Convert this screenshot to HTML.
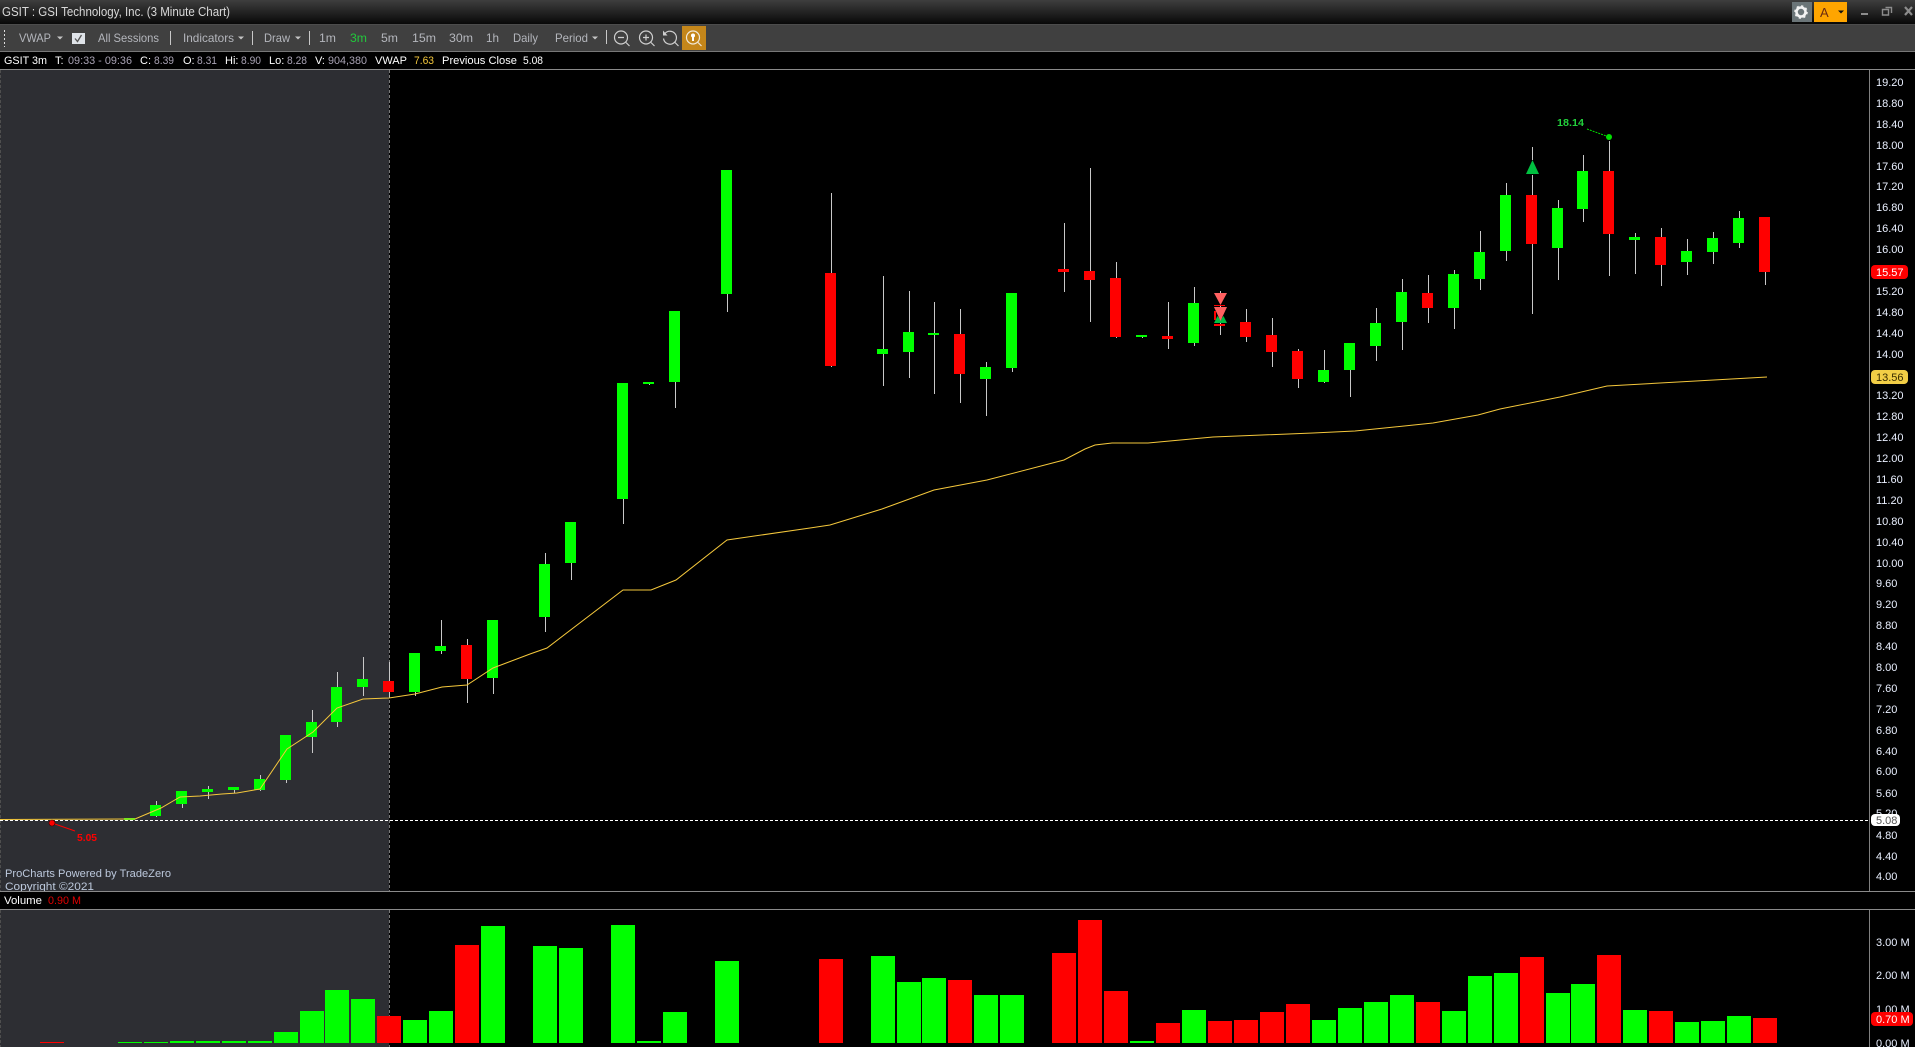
<!DOCTYPE html>
<html lang="en"><head><meta charset="utf-8"><title>GSIT : GSI Technology, Inc. (3 Minute Chart)</title>
<style>
html,body{margin:0;padding:0;background:#000;width:1915px;height:1047px;overflow:hidden}
svg{display:block;font-family:"Liberation Sans",Arial,sans-serif}
.r{shape-rendering:crispEdges}
.tb{font-size:12px;fill:#b4b6bc}
.i{font-size:11px;fill:#fff}
.d{font-size:11px;fill:#a9a3b4}
.a{font-size:11px;fill:#eaf0ff}
</style></head><body>
<svg width="1915" height="1047" viewBox="0 0 1915 1047" xmlns="http://www.w3.org/2000/svg">
<defs><linearGradient id="tg" x1="0" y1="0" x2="0" y2="1"><stop offset="0" stop-color="#3e3e3e"/><stop offset="1" stop-color="#080808"/></linearGradient></defs>
<rect width="1915" height="1047" fill="#000"/>
<!-- title bar -->
<rect class="r" width="1915" height="24" fill="url(#tg)"/>
<text x="2" y="16" font-size="13" fill="#d8d8d8" textLength="228" lengthAdjust="spacingAndGlyphs">GSIT : GSI Technology, Inc. (3 Minute Chart)</text>
<rect class="r" x="1792" y="2" width="20" height="20" fill="#6b7578"/>
<circle cx="1801" cy="12" r="4.5" fill="none" stroke="#f2f2f2" stroke-width="2.6"/>
<circle cx="1801" cy="12" r="6" fill="none" stroke="#f2f2f2" stroke-width="1.6" stroke-dasharray="2.2 2.5"/>
<rect class="r" x="1814" y="2" width="33" height="20" fill="#ffa500"/>
<text x="1820" y="17" font-size="13" fill="#6b2a10">A</text>
<path d="M1838 10.5h6l-3 3z" fill="#111"/>
<rect class="r" x="1861" y="13" width="7" height="2" fill="#8c8c8c"/>
<path d="M1885.5 7.5h6v5.500M1882.500 9.500h6v5.500h-6z" fill="none" stroke="#8c8c8c" stroke-width="1.400"/>
<path d="M1905 7l7 8M1912 7l-7 8" stroke="#8c8c8c" stroke-width="2.200"/>
<!-- toolbar -->
<rect class="r" y="24" width="1915" height="27" fill="#404040"/>
<rect class="r" y="24" width="1915" height="1" fill="#4c4c4c"/>
<rect class="r" y="51" width="1915" height="1" fill="#777"/>
<path class="r" d="M4.500 30v17" stroke="#ddd" stroke-dasharray="2 2"/>
<text class="tb" x="19" y="42" textLength="32" lengthAdjust="spacingAndGlyphs">VWAP</text>
<path d="M57 36.500h6l-3 3z" fill="#c4c4c4"/>
<rect class="r" x="72" y="33" width="13" height="11" fill="#dfe3e8"/>
<path d="M75 38.500l2.500 3 4-6.500" fill="none" stroke="#555" stroke-width="1.300"/>
<text class="tb" x="98" y="42" textLength="61" lengthAdjust="spacingAndGlyphs">All Sessions</text>
<rect class="r" x="170" y="31" width="1" height="14" fill="#c8c8c8"/>
<text class="tb" x="183" y="42" textLength="51" lengthAdjust="spacingAndGlyphs">Indicators</text>
<path d="M238 36.500h6l-3 3z" fill="#c4c4c4"/>
<rect class="r" x="252" y="31" width="1" height="14" fill="#c8c8c8"/>
<text class="tb" x="264" y="42" textLength="26" lengthAdjust="spacingAndGlyphs">Draw</text>
<path d="M295 36.500h6l-3 3z" fill="#c4c4c4"/>
<rect class="r" x="309" y="31" width="1" height="14" fill="#c8c8c8"/>
<text class="tb" x="319" y="42" textLength="17" lengthAdjust="spacingAndGlyphs">1m</text>
<text class="tb" x="350" y="42" textLength="17" lengthAdjust="spacingAndGlyphs" style="fill:#22c83c">3m</text>
<text class="tb" x="381" y="42" textLength="17" lengthAdjust="spacingAndGlyphs">5m</text>
<text class="tb" x="412" y="42" textLength="24" lengthAdjust="spacingAndGlyphs">15m</text>
<text class="tb" x="449" y="42" textLength="24" lengthAdjust="spacingAndGlyphs">30m</text>
<text class="tb" x="486" y="42" textLength="13" lengthAdjust="spacingAndGlyphs">1h</text>
<text class="tb" x="513" y="42" textLength="25" lengthAdjust="spacingAndGlyphs">Daily</text>
<text class="tb" x="555" y="42" textLength="33" lengthAdjust="spacingAndGlyphs">Period</text>
<path d="M592 36.500h6l-3 3z" fill="#c4c4c4"/>
<rect class="r" x="606" y="30" width="1" height="14" fill="#c8c8c8"/>
<g fill="none" stroke="#cfcfcf" stroke-width="1.200">
<circle cx="621" cy="37.500" r="6.500"/><path d="M618 37.500h6M626 42.500l3.500 3.500"/>
<circle cx="646" cy="37.500" r="6.500"/><path d="M643 37.500h6M646 34.500v6M651 42.500l3.500 3.500"/>
<path d="M665 33.500a6.500 6.500 0 1 1 -1.500 5M675 42.500l3.500 3.500"/>
</g>
<path d="M663 30.500v5h4.500z" fill="#cfcfcf"/>
<rect class="r" x="682" y="26" width="24" height="24" fill="#c4861a"/>
<circle cx="693" cy="37.500" r="6.500" fill="none" stroke="#f0e8d8" stroke-width="1.200"/>
<path d="M698 42.500l3.500 3.500" stroke="#f0e8d8" stroke-width="1.200"/>
<circle cx="693" cy="35.500" r="2" fill="#fff"/><rect class="r" x="692" y="36" width="2" height="5" fill="#fff"/>
<!-- info bar -->
<rect class="r" y="52" width="1915" height="17" fill="#000"/>
<rect class="r" y="69" width="1915" height="1" fill="#8a8a8a"/>
<text class="i" x="4" y="64" textLength="43" lengthAdjust="spacingAndGlyphs">GSIT 3m</text>
<text class="i" x="55" y="64">T:</text>
<text class="d" x="68" y="64" textLength="64" lengthAdjust="spacingAndGlyphs">09:33 - 09:36</text>
<text class="i" x="140" y="64">C:</text><text class="d" x="154" y="64" textLength="20" lengthAdjust="spacingAndGlyphs">8.39</text>
<text class="i" x="183" y="64">O:</text><text class="d" x="197" y="64" textLength="20" lengthAdjust="spacingAndGlyphs">8.31</text>
<text class="i" x="225" y="64">Hi:</text><text class="d" x="241" y="64" textLength="20" lengthAdjust="spacingAndGlyphs">8.90</text>
<text class="i" x="269" y="64">Lo:</text><text class="d" x="287" y="64" textLength="20" lengthAdjust="spacingAndGlyphs">8.28</text>
<text class="i" x="315" y="64">V:</text><text class="d" x="328" y="64" textLength="39" lengthAdjust="spacingAndGlyphs">904,380</text>
<text class="i" x="375" y="64" textLength="32" lengthAdjust="spacingAndGlyphs">VWAP</text>
<text class="i" x="414" y="64" textLength="20" lengthAdjust="spacingAndGlyphs" style="fill:#f5c83c">7.63</text>
<text class="i" x="442" y="64" textLength="75" lengthAdjust="spacingAndGlyphs">Previous Close</text>
<text class="i" x="523" y="64" textLength="20" lengthAdjust="spacingAndGlyphs">5.08</text>
<!-- shaded areas -->
<rect class="r" y="70" width="389" height="821" fill="#2d2e33"/>
<rect class="r" y="910" width="389" height="137" fill="#2d2e33"/>
<path class="r" d="M389.500 70v821M389.500 910v137" stroke="#7a7a7a" stroke-dasharray="3 2"/>
<path class="r" d="M0.500 70v821M0.500 910v137" stroke="#4e4e4e" stroke-dasharray="3 2"/>
<!-- prev close dashed -->
<path class="r" d="M0 820.500H1869" stroke="#fff" stroke-dasharray="3 2"/>
<!-- wicks -->
<path class="r" fill="none" stroke="#c8c8c8" d="M156.500 801V817M182.500 791V808M208.500 786V799M234.500 787V793M260.500 775V791M286.500 735V783M312.500 710V753M337.500 672V727M363.500 657V696M389.500 662V698M415.500 653V696M441.500 620V654M467.500 639V703M493.500 620V694M545.500 553V632M571.500 522V580M623.500 499V524M649.500 382V385M675.500 311V408M727.500 170V312M831.500 193V367M883.500 276V386M909.500 291V378M934.500 302V394M960.500 309V403M986.500 362V416M1012.500 293V372M1064.500 223V292M1090.500 168V322M1116.500 262V338M1142.500 335V338M1168.500 302V349M1194.500 287V346M1220.500 291V293M1220.500 305V307M1220.500 321V335M1246.500 309V342M1272.500 318V367M1298.500 349V388M1324.500 350V383M1350.500 343V397M1376.500 308V361M1402.500 279V350M1428.500 275V323M1454.500 270V329M1480.500 231V290M1506.500 183V261M1532.500 147V160M1532.500 175V314M1558.500 200V280M1583.500 155V222M1609.500 141V276M1635.500 233V274M1661.500 228V286M1687.500 239V275M1713.500 232V264M1739.500 211V248M1765.500 217V285"/>
<!-- green bodies -->
<path class="r" fill="#0f0" d="M124 818h11v2h-11zM150 805h11v11h-11zM176 791h11v13h-11zM202 789h11v3h-11zM228 787h11v3h-11zM254 779h11v11h-11zM280 735h11v45h-11zM306 722h11v15h-11zM331 687h11v35h-11zM357 679h11v8h-11zM409 653h11v39h-11zM435 646h11v5h-11zM487 620h11v58h-11zM539 564h11v53h-11zM565 522h11v41h-11zM617 383h11v116h-11zM643 382h11v2h-11zM669 311h11v71h-11zM721 170h11v124h-11zM877 349h11v5h-11zM903 332h11v20h-11zM928 333h11v2h-11zM980 367h11v12h-11zM1006 293h11v75h-11zM1136 335h11v2h-11zM1188 303h11v40h-11zM1318 370h11v12h-11zM1344 343h11v27h-11zM1370 323h11v23h-11zM1396 292h11v30h-11zM1448 274h11v34h-11zM1474 252h11v27h-11zM1500 195h11v56h-11zM1552 208h11v40h-11zM1577 171h11v38h-11zM1629 237h11v3h-11zM1681 251h11v11h-11zM1707 238h11v14h-11zM1733 218h11v25h-11z"/>
<!-- red bodies -->
<path class="r" fill="#f00" d="M383 681h11v11h-11zM461 645h11v34h-11zM825 273h11v93h-11zM954 334h11v40h-11zM1058 269h11v3h-11zM1084 271h11v9h-11zM1110 278h11v59h-11zM1162 336h11v3h-11zM1214 305h11v1h-11zM1214 311h2v9h-2zM1214 324h11v2h-11zM1240 322h11v15h-11zM1266 335h11v17h-11zM1292 351h11v28h-11zM1422 293h11v15h-11zM1526 195h11v49h-11zM1603 171h11v63h-11zM1655 237h11v28h-11zM1759 217h11v55h-11z"/>
<!-- markers -->
<polygon points="1214,323 1217.500,316 1220.500,320 1223.500,316 1227,323" fill="#00c040"/>
<polygon points="1214,293 1227,293 1220.500,305" fill="#ff6060"/>
<polygon points="1214,307 1227,307 1220.500,321" fill="#ff6060"/>
<polygon points="1526,174 1532.500,160 1539,174" fill="#00c040"/>
<!-- VWAP -->
<polyline fill="none" stroke="#f5c83c" stroke-width="1" points="0,819.500 135,819 161,808 180,797 200,796 222,794 237,793 260,789 287,749 313,732 337,708 363,699 389,698 415,694 442,687 467,685 493,668 530,654 547,648 623,590 651,590 676,580 727,540 810,528 830,525 882,509 934,490 987,480 1064,460 1085,449 1095,445 1112,443 1148,443 1213,437 1313,433 1355,431 1433,423 1478,415 1500,409 1560,397 1607,386 1767,377"/>
<!-- hi / lo -->
<path d="M1587 129L1609 137" stroke="#00e000" stroke-dasharray="2 1"/>
<circle cx="1609" cy="137" r="3" fill="#00e000"/>
<text x="1557" y="126" font-size="10.500" font-weight="bold" fill="#22d03c" textLength="27" lengthAdjust="spacingAndGlyphs">18.14</text>
<path d="M52 823L75 831" stroke="#f00"/>
<circle cx="52" cy="823" r="3" fill="#f00" stroke="#400" stroke-width=".6"/>
<text x="77" y="841" font-size="10.500" font-weight="bold" fill="#f00" textLength="20" lengthAdjust="spacingAndGlyphs">5.05</text>
<text x="5" y="877" font-size="11" fill="#bcc8dc" textLength="166" lengthAdjust="spacingAndGlyphs">ProCharts Powered by TradeZero</text>
<text x="5" y="890" font-size="11" fill="#bcc8dc" textLength="89" lengthAdjust="spacingAndGlyphs">Copyright ©2021</text>
<!-- volume header -->
<rect class="r" y="891" width="1915" height="19" fill="#000"/>
<rect class="r" y="891" width="1915" height="1" fill="#8a8a8a"/>
<rect class="r" y="909" width="1915" height="1" fill="#8a8a8a"/>
<text class="i" x="4" y="904" textLength="38" lengthAdjust="spacingAndGlyphs">Volume</text>
<text class="i" x="48" y="904" textLength="33" lengthAdjust="spacingAndGlyphs" style="fill:#e00000">0.90 M</text>
<!-- volume bars -->
<path class="r" fill="#0f0" d="M118 1042h24v1h-24zM144 1042h24v1h-24zM170 1041h24v2h-24zM196 1041h24v2h-24zM222 1041h24v2h-24zM248 1041h24v2h-24zM274 1032h24v11h-24zM300 1011h24v32h-24zM325 990h24v53h-24zM351 999h24v44h-24zM403 1020h24v23h-24zM429 1011h24v32h-24zM481 926h24v117h-24zM533 946h24v97h-24zM559 948h24v95h-24zM611 925h24v118h-24zM637 1041h24v2h-24zM663 1012h24v31h-24zM715 961h24v82h-24zM871 956h24v87h-24zM897 982h24v61h-24zM922 978h24v65h-24zM974 995h24v48h-24zM1000 995h24v48h-24zM1130 1041h24v2h-24zM1182 1010h24v33h-24zM1312 1020h24v23h-24zM1338 1008h24v35h-24zM1364 1002h24v41h-24zM1390 995h24v48h-24zM1442 1011h24v32h-24zM1468 976h24v67h-24zM1494 973h24v70h-24zM1546 993h24v50h-24zM1571 984h24v59h-24zM1623 1010h24v33h-24zM1675 1022h24v21h-24zM1701 1021h24v22h-24zM1727 1016h24v27h-24z"/>
<path class="r" fill="#f00" d="M40 1042h24v1h-24zM377 1016h24v27h-24zM455 945h24v98h-24zM819 959h24v84h-24zM948 980h24v63h-24zM1052 953h24v90h-24zM1078 920h24v123h-24zM1104 991h24v52h-24zM1156 1023h24v20h-24zM1208 1021h24v22h-24zM1234 1020h24v23h-24zM1260 1012h24v31h-24zM1286 1004h24v39h-24zM1416 1002h24v41h-24zM1520 957h24v86h-24zM1597 955h24v88h-24zM1649 1011h24v32h-24zM1753 1018h24v25h-24z"/>
<!-- right axis -->
<path class="r" d="M1869.500 70V891M1869.500 910V1047" stroke="#808080"/>
<g class="a">
<text x="1876" y="86">19.20</text><text x="1876" y="107">18.80</text><text x="1876" y="128">18.40</text><text x="1876" y="149">18.00</text><text x="1876" y="170">17.60</text><text x="1876" y="190">17.20</text><text x="1876" y="211">16.80</text><text x="1876" y="232">16.40</text><text x="1876" y="253">16.00</text><text x="1876" y="295">15.20</text><text x="1876" y="316">14.80</text><text x="1876" y="337">14.40</text><text x="1876" y="358">14.00</text><text x="1876" y="399">13.20</text><text x="1876" y="420">12.80</text><text x="1876" y="441">12.40</text><text x="1876" y="462">12.00</text><text x="1876" y="483">11.60</text><text x="1876" y="504">11.20</text><text x="1876" y="525">10.80</text><text x="1876" y="546">10.40</text><text x="1876" y="567">10.00</text><text x="1876" y="587">9.60</text><text x="1876" y="608">9.20</text><text x="1876" y="629">8.80</text><text x="1876" y="650">8.40</text><text x="1876" y="671">8.00</text><text x="1876" y="692">7.60</text><text x="1876" y="713">7.20</text><text x="1876" y="734">6.80</text><text x="1876" y="755">6.40</text><text x="1876" y="775">6.00</text><text x="1876" y="797">5.60</text><text x="1876" y="817">5.20</text><text x="1876" y="839">4.80</text><text x="1876" y="860">4.40</text><text x="1876" y="880">4.00</text>
<text x="1876" y="946">3.00 M</text><text x="1876" y="979">2.00 M</text><text x="1876" y="1013">1.00 M</text><text x="1876" y="1047">0.00 M</text>
</g>
<rect x="1871" y="265" width="37" height="14" rx="4" fill="#f00"/>
<text x="1876" y="276" font-size="11" fill="#fff">15.57</text>
<rect x="1871" y="370" width="37" height="14" rx="4" fill="#f2ce46"/>
<text x="1876" y="381" font-size="11" fill="#3a2c00">13.56</text>
<rect x="1871" y="814" width="29" height="12" rx="4" fill="#fff"/>
<text x="1876" y="824" font-size="11" fill="#555">5.08</text>
<rect x="1871" y="1012" width="42" height="14" rx="4" fill="#f00"/>
<text x="1876" y="1023" font-size="11" fill="#fff">0.70 M</text>
</svg>
</body></html>
